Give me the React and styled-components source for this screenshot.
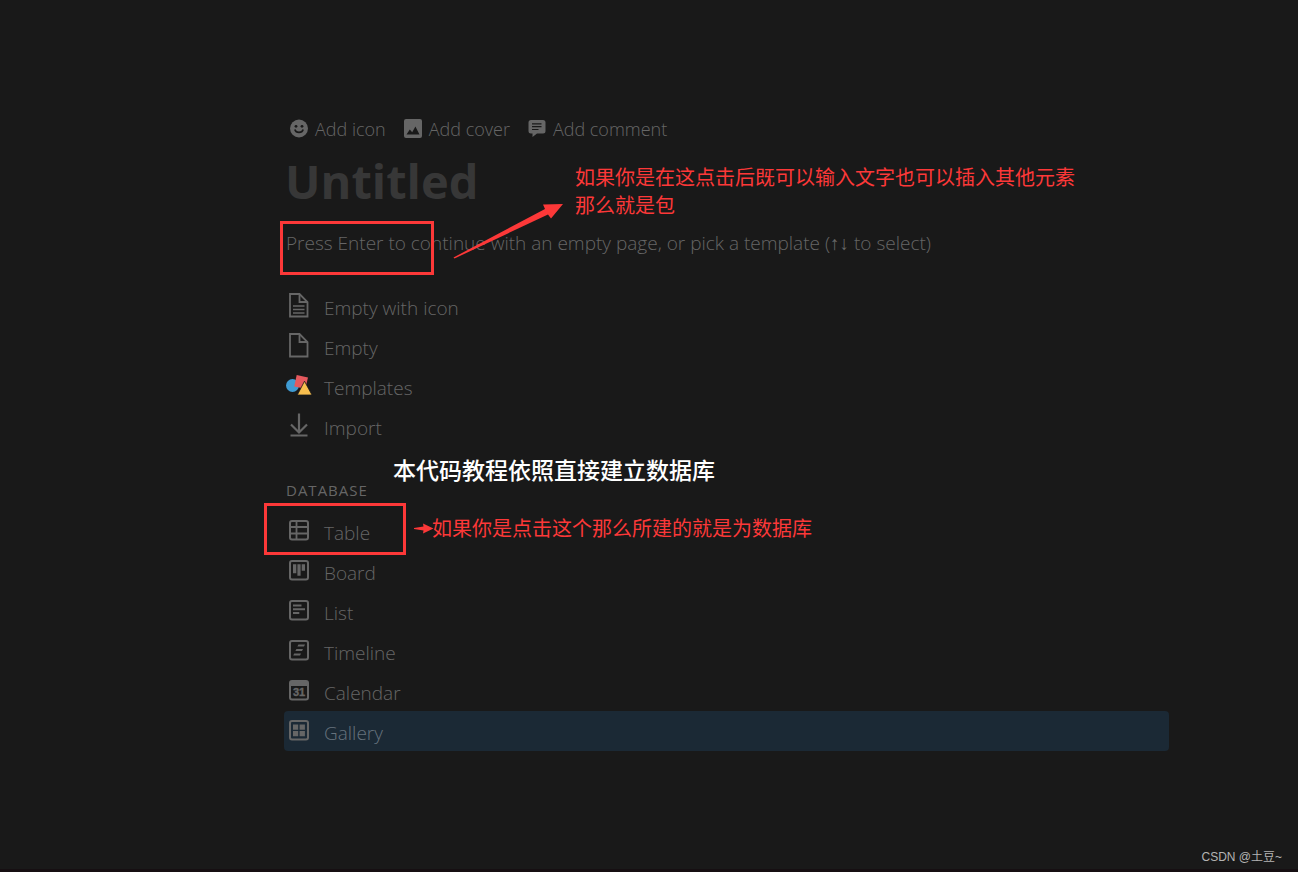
import React from 'react';
import styled, { createGlobalStyle } from 'styled-components';

const GlobalStyle = createGlobalStyle`
  * {
    box-sizing: border-box;
  }
  body {
    margin: 0;
    background-color: #191919;
    font-family: "Open Sans", "Noto Sans CJK SC", sans-serif;
    color: #666666;
  }
`;

const Page = styled.div`
  display: flex;
  flex-direction: column;
  min-height: 100vh;
  border-bottom: 3px solid #160f12;
`;

const Content = styled.main`
  flex: 1;
  padding: 115px 129px 40px 284px;
`;

const Controls = styled.div`
  display: flex;
  gap: 18px;
  height: 28px;
  padding-left: 6px;
`;

const ControlButton = styled.button`
  display: flex;
  align-items: center;
  gap: 7px;
  padding: 0;
  border: none;
  background: none;
  color: inherit;
  font-family: inherit;
  font-size: 18px;
  font-weight: 300;
  line-height: 28px;
  white-space: nowrap;
  cursor: pointer;

  svg {
    margin-bottom: 2px;
  }
`;

const Title = styled.h1`
  margin: 4px 0 0;
  padding-left: 1px;
  font-size: 47px;
  line-height: 68px;
  font-weight: 700;
  color: #373737;
`;

const Hint = styled.p`
  position: relative;
  margin: 13px 0 28px;
  padding-left: 2px;
  font-size: 19px;
  font-weight: 350;
  line-height: 30px;
`;

const Keys = styled.span`
  font-family: "Liberation Sans", sans-serif;
  line-height: 1;
`;

const List = styled.ul`
  margin: 0;
  padding: 0;
  list-style: none;
`;

const Item = styled.li`
  position: relative;
`;

const ItemButton = styled.button`
  display: flex;
  align-items: center;
  gap: 12px;
  width: 100%;
  height: 40px;
  padding: 0 2px;
  border: none;
  border-radius: 4px;
  background-color: ${props => (props.$active ? '#1b2935' : 'transparent')};
  color: ${props => (props.$active ? '#66727d' : 'inherit')};
  font-family: inherit;
  font-size: 19px;
  font-weight: 350;
  line-height: 28px;
  text-align: left;
  cursor: pointer;
`;

const IconSlot = styled.span`
  display: flex;
  justify-content: center;
  width: 26px;
  padding-bottom: 2px;
`;

const ItemLabel = styled.span`
  padding-top: 4px;
`;

const SectionTitle = styled.h2`
  position: relative;
  margin: 34px 0 10px;
  padding-left: 2px;
  font-size: 15px;
  line-height: 21px;
  font-weight: 400;
  letter-spacing: 1px;
`;

/* marks drawn on top of the page */
const Frame = styled.span`
  position: absolute;
  top: ${props => props.$top}px;
  left: ${props => props.$left}px;
  width: ${props => props.$width}px;
  height: ${props => props.$height}px;
  border: 3px solid #fc3838;
  pointer-events: none;
`;

const Arrow = styled.svg`
  position: absolute;
  top: ${props => props.$top}px;
  left: ${props => props.$left}px;
  fill: #fc3838;
  pointer-events: none;
`;

const Note = styled.span`
  position: absolute;
  top: ${props => props.$top}px;
  left: ${props => props.$left}px;
  font-family: "Noto Sans CJK SC", sans-serif;
  font-size: ${props => (props.$main ? 23 : 20)}px;
  font-weight: ${props => (props.$main ? 500 : 400)};
  line-height: 28px;
  letter-spacing: 0;
  white-space: nowrap;
  color: ${props => (props.$main ? '#ffffff' : '#fc3838')};
  pointer-events: none;
`;

const Watermark = styled.footer`
  padding: 0 16px 3px 0;
  font-family: "Liberation Sans", "Noto Sans CJK SC", sans-serif;
  font-size: 12px;
  line-height: 18px;
  text-align: right;
  color: #b4b4b4;
`;

const SmileIcon = () => (
  <svg width="18" height="19" viewBox="0 0 18 19">
    <circle cx="9" cy="9.5" r="9" fill="#666" />
    <circle cx="6" cy="7.3" r="1.4" fill="#191919" />
    <circle cx="12" cy="7.3" r="1.4" fill="#191919" />
    <path d="M4.8 10.4C6 14.4 12 14.4 13.2 10.4" fill="none" stroke="#191919" strokeWidth="1.6" />
  </svg>
);

const CoverIcon = () => (
  <svg width="18" height="19" viewBox="0 0 18 19">
    <rect width="18" height="19" rx="2" fill="#666" />
    <path d="M2.5 15.5L5.8 10.6L8.2 13.2L11.4 7.4L15.5 15.5Z" fill="#191919" />
  </svg>
);

const CommentIcon = () => (
  <svg width="18" height="19" viewBox="0 0 18 19">
    <path d="M3 1H15Q17.5 1 17.5 3.5V12Q17.5 14.5 15 14.5H9L4.5 18V14.5H3Q0.5 14.5 0.5 12V3.5Q0.5 1 3 1Z" fill="#666" />
    <path d="M4 4.8H13.5M4 7.7H13.5M4 10.5H10.5" stroke="#191919" strokeWidth="1.2" />
  </svg>
);

const PageIcon = ({ lines }) => (
  <svg width="20" height="25" viewBox="0 0 20 25" fill="none" stroke="#666" strokeWidth="1.8">
    <path d="M1 1H10.5L18.5 9V23.5H1Z" />
    <path d="M10.5 1V9H18.5" />
    {lines && <path d="M4 13H15.5M4 16.5H15.5M4 20H15.5" strokeWidth="1.5" />}
  </svg>
);

const TemplatesIcon = () => (
  <svg width="26" height="22" viewBox="0 0 26 22">
    <circle cx="6.5" cy="11.5" r="6.5" fill="#3f9bd3" />
    <path d="M10.7 1L22 3.4L19.3 14.7L8.2 12.5Z" fill="#e5595e" />
    <path d="M18.5 7.2L26 21H11.3Z" fill="#f7be4e" stroke="#191919" strokeWidth="0.8" />
  </svg>
);

const ImportIcon = () => (
  <svg width="18" height="24" viewBox="0 0 18 24" fill="none" stroke="#666" strokeWidth="2.2">
    <path d="M9 0.5V19.5M1 11.5L9 19.5L17 11.5M0.5 22.5H17.5" />
  </svg>
);

const BoxIcon = ({ children }) => (
  <svg width="20" height="21" viewBox="0 0 20 21">
    <rect x="1" y="1" width="18" height="18.5" rx="2" fill="none" stroke="#666" strokeWidth="2" />
    {children}
  </svg>
);

const TableIcon = () => (
  <BoxIcon>
    <path d="M7.5 1V19.5M1 7H19M1 13.5H19" stroke="#666" strokeWidth="1.8" />
  </BoxIcon>
);

const BoardIcon = () => (
  <BoxIcon>
    <path d="M4 4.2H7.3V13.2H4ZM8.4 4.2H11.6V15.7H8.4ZM12.7 4.2H16V10.7H12.7Z" fill="#666" />
  </BoxIcon>
);

const ListIcon = () => (
  <BoxIcon>
    <path d="M4 5.6H12.5M4 9.3H16M4 13H10.3" stroke="#666" strokeWidth="2" />
  </BoxIcon>
);

const TimelineIcon = () => (
  <BoxIcon>
    <path d="M9.4 4.6H16L15 6.6H8.4ZM7.4 9H14L13 11H6.4ZM5.2 13.6H12L11 15.6H4.2Z" fill="#666" />
  </BoxIcon>
);

const CalendarIcon = () => (
  <BoxIcon>
    <rect x="1" y="1" width="18" height="5" fill="#666" />
    <text x="10" y="16" fill="#666" stroke="#666" strokeWidth="0.4" fontFamily="Liberation Sans, sans-serif" fontSize="11" fontWeight="700" textAnchor="middle">31</text>
  </BoxIcon>
);

const GalleryIcon = () => (
  <BoxIcon>
    <path d="M4 4.6H9.2V9.8H4ZM10.6 4.6H15.9V9.8H10.6ZM4 11.1H9.2V16.3H4ZM10.6 11.1H15.9V16.3H10.6Z" fill="#666" />
  </BoxIcon>
);

const controls = [
  { name: 'Add icon', icon: <SmileIcon /> },
  { name: 'Add cover', icon: <CoverIcon /> },
  { name: 'Add comment', icon: <CommentIcon /> },
];

const pages = [
  { name: 'Empty with icon', icon: <PageIcon lines /> },
  { name: 'Empty', icon: <PageIcon /> },
  { name: 'Templates', icon: <TemplatesIcon /> },
  { name: 'Import', icon: <ImportIcon /> },
];

const databases = [
  {
    name: 'Table',
    icon: <TableIcon />,
    marks: (
      <>
        <Frame $top={-8} $left={-20} $width={142} $height={52} />
        <Arrow $top={12} $left={130} width="20" height="11" viewBox="0 0 20 11">
          <path d="M0 5L9.5 3.6L9 0.5L19.5 5.5L9 10.5L9.5 7.4L0 6Z" />
        </Arrow>
        <Note $top={3} $left={148}>如果你是点击这个那么所建的就是为数据库</Note>
      </>
    ),
  },
  { name: 'Board', icon: <BoardIcon /> },
  { name: 'List', icon: <ListIcon /> },
  { name: 'Timeline', icon: <TimelineIcon /> },
  { name: 'Calendar', icon: <CalendarIcon /> },
  { name: 'Gallery', icon: <GalleryIcon />, active: true },
];

function Options({ items }) {
  return (
    <List>
      {items.map(item => (
        <Item key={item.name}>
          <ItemButton type="button" $active={item.active}>
            <IconSlot>{item.icon}</IconSlot>
            <ItemLabel>{item.name}</ItemLabel>
          </ItemButton>
          {item.marks}
        </Item>
      ))}
    </List>
  );
}

export default function App() {
  return (
    <Page>
      <GlobalStyle />
      <Content>
        <Controls>
          {controls.map(control => (
            <ControlButton key={control.name} type="button">
              {control.icon}
              {control.name}
            </ControlButton>
          ))}
        </Controls>
        <Title>Untitled</Title>
        <Hint>
          Press Enter to continue with an empty page, or pick a template (<Keys>↑↓</Keys> to select)
          <Frame $top={-7} $left={-4} $width={154} $height={54} />
          <Arrow $top={-25} $left={169} width="112" height="57" viewBox="0 0 112 57">
            <path d="M0.5 54.5L92 6L90 1.5L110 1L98 15.5L95 11.5L1.5 55.5Z" />
          </Arrow>
          <Note $top={-65} $left={291}>
            如果你是在这点击后既可以输入文字也可以插入其他元素
            <br />
            那么就是包
          </Note>
        </Hint>
        <Options items={pages} />
        <SectionTitle>
          DATABASE
          <Note $main $top={-25} $left={109}>本代码教程依照直接建立数据库</Note>
        </SectionTitle>
        <Options items={databases} />
      </Content>
      <Watermark>CSDN @土豆~</Watermark>
    </Page>
  );
}
